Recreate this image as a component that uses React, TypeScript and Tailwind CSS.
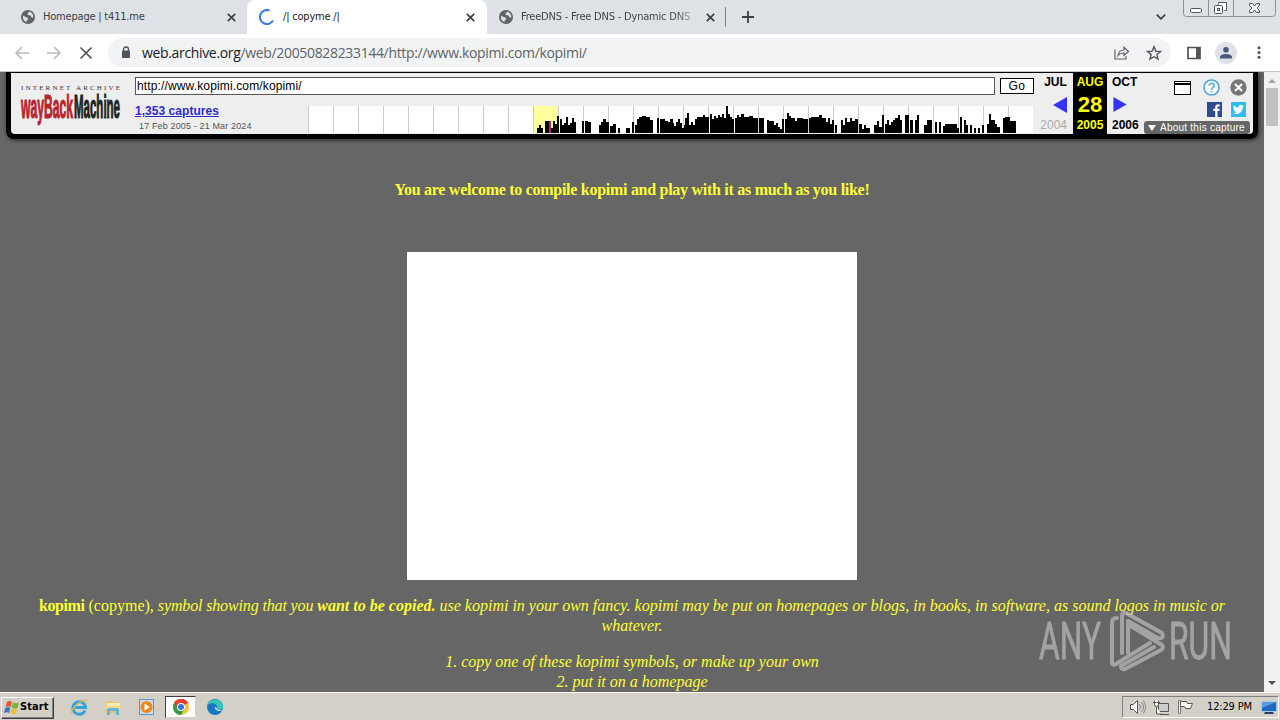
import React from 'react'

// [x, width, height] of each run of the capture histogram
const captures: number[][] = [
    [229, 6, 5], [231, 2, 8], [237, 4, 12], [243, 2, 5], [245, 2, 12], [247, 2, 9], [249, 2, 17],
    [252, 2, 14], [254, 2, 8], [256, 2, 10], [258, 2, 16], [260, 2, 8], [262, 2, 10], [264, 2, 15], [266, 2, 11],
    [274, 2, 12], [277, 3, 12], [280, 3, 11], [291, 2, 8], [293, 2, 11], [295, 3, 14], [298, 3, 11],
    [302, 3, 7], [305, 3, 9], [310, 2, 5], [318, 4, 5], [324, 2, 11], [327, 2, 8], [329, 2, 14], [331, 3, 16],
    [334, 4, 17], [338, 4, 16], [342, 3, 13], [349, 2, 15], [352, 5, 14], [357, 3, 12], [360, 2, 11], [362, 3, 14],
    [364, 2, 10], [366, 2, 7], [368, 2, 11], [370, 2, 14], [372, 2, 10], [374, 2, 5], [376, 2, 8],
    [377, 2, 15], [379, 2, 20], [381, 2, 8], [383, 2, 11], [385, 2, 8], [387, 2, 14], [389, 6, 16], [395, 2, 18],
    [397, 4, 16], [402, 2, 19], [404, 2, 14], [406, 2, 17], [408, 2, 15], [410, 2, 18], [412, 2, 16], [414, 2, 19],
    [416, 2, 15], [418, 2, 27], [420, 2, 19], [422, 2, 16], [424, 2, 14], [427, 2, 15], [429, 2, 18], [431, 2, 16],
    [433, 3, 19], [436, 5, 16], [441, 4, 17], [445, 5, 15], [451, 5, 15], [459, 2, 13], [461, 5, 12], [466, 2, 8],
    [468, 2, 10], [470, 2, 6], [472, 2, 4], [474, 2, 14], [477, 2, 14], [479, 2, 20], [481, 2, 17], [483, 4, 15],
    [487, 2, 12], [489, 6, 15], [495, 5, 14], [501, 2, 15], [503, 8, 16], [511, 3, 18], [514, 4, 15], [518, 2, 11],
    [520, 2, 15], [522, 2, 9], [524, 2, 13], [527, 2, 8], [533, 2, 13], [535, 2, 8], [537, 2, 15], [539, 3, 11],
    [542, 2, 15], [544, 3, 12], [547, 3, 14], [551, 3, 9], [554, 2, 4], [556, 2, 8], [558, 4, 5], [566, 3, 8],
    [569, 2, 12], [571, 3, 6], [574, 2, 18], [577, 2, 9], [579, 2, 13], [581, 2, 8], [583, 2, 11], [585, 2, 13],
    [587, 3, 15], [590, 2, 18], [592, 2, 13], [597, 4, 18], [602, 3, 13], [607, 3, 13], [609, 2, 18],
    [616, 3, 8], [619, 5, 13], [622, 2, 11], [627, 2, 11], [631, 2, 11], [635, 2, 7], [637, 12, 9], [649, 2, 5],
    [652, 2, 16], [656, 2, 13], [658, 2, 8], [662, 2, 8], [666, 2, 5], [670, 2, 5], [674, 2, 8], [679, 2, 9],
    [681, 2, 19], [683, 4, 13], [687, 2, 9], [689, 3, 6], [695, 2, 15], [697, 5, 16], [702, 2, 12], [704, 4, 12],
]

const Globe = () => (
    <svg className="w-[14px] h-[14px] shrink-0" viewBox="0 0 14 14">
        <circle cx="7" cy="7" r="7" fill="#5f6368" />
        <path d="M2 5.5 4.5 7l2 .4.8 2-1.7.8v2C3 11.500 1.500 9 2 5.500Z" fill="#dee1e6" />
        <path d="M8.500 1.800 6.500 3.200 7 5l2.500.6 1 2 1.700-.1C12.800 5 11 2.400 8.500 1.800Z" fill="#dee1e6" />
    </svg>
)

const Cross = ({ className = '' }: { className?: string }) => (
    <svg className={`w-[9px] h-[9px] shrink-0 ${className}`} viewBox="0 0 9 9" stroke="#3c4043" strokeWidth="1.7">
        <path d="M.8.8l7.4 7.4M8.200.8.8 8.200" />
    </svg>
)

const TabStrip = () => (
    <div className="flex h-[34px] bg-[#dee1e6] text-[11px] tracking-[-0.2px] text-[#3c4043] font-['DejaVu_Sans_Condensed','DejaVu_Sans',sans-serif]">
        <div className="flex items-center w-[247px] pl-[21px]">
            <Globe />
            <span className="ml-2 w-[184px] whitespace-nowrap">Homepage | t411.me</span>
            <Cross />
        </div>
        <div className="flex items-center w-[240px] pl-3 bg-white rounded-t-lg text-[#202124]">
            <svg className="w-4 h-4 shrink-0" viewBox="0 0 16 16" fill="none" stroke="#3b78e7" strokeWidth="2">
                <path d="M10.500 1.500A7 7 0 1 0 14 11.500" />
            </svg>
            <span className="ml-2 w-[183px] whitespace-nowrap">/| copyme /|</span>
            <Cross />
        </div>
        <div className="flex items-center w-[239px] pl-3">
            <Globe />
            <span className="ml-2 w-[172px] overflow-hidden whitespace-nowrap bg-linear-to-r from-[#3c4043] from-90% to-[#b0b4ba] bg-clip-text text-transparent">FreeDNS - Free DNS - Dynamic DNS</span>
            <Cross className="ml-[13px]" />
            <div className="ml-auto w-px h-5 bg-[#80868b]" />
        </div>
        <svg className="w-3 h-3 mt-[11px] ml-4" viewBox="0 0 12 12" stroke="#3c4043" strokeWidth="1.800">
            <path d="M6 0v12M0 6h12" />
        </svg>
        <svg className="w-[10px] h-[6px] mt-[14px] ml-auto" viewBox="0 0 10 6" fill="none" stroke="#3c4043" strokeWidth="1.700">
            <path d="m.8.6 4.200 4.200L9.200.6" />
        </svg>
        <svg className="w-[93px] h-[17px] ml-[17px] mr-1" viewBox="0 0 93 17" fill="none" stroke="#8b8f96">
            <path d="M.5 0v13.500q0 3 3 3h86q3 0 3-3V0M25.500 0v16M50.500 0v16" />
            <g stroke="#50555c">
                <rect x="7.500" y="8.500" width="11" height="4" rx="1" fill="#fff" />
                <path d="M35.500 4.500v-2h8v8h-2" fill="#fff" />
                <rect x="31.500" y="5.500" width="8" height="8" rx="1" fill="#fff" />
                <rect x="34.500" y="8.500" width="2" height="2" />
                <path d="M66.500 3.500h3l2 2.500 2-2.500h3v2L74 8l2.500 2.500v2h-3l-2-2.500-2 2.500h-3v-2L69 8l-2.500-2.500Z" fill="#fff" />
            </g>
        </svg>
    </div>
)

const AddressBar = () => (
    <div className="flex items-center h-[38px] bg-white border-b border-[#c8c8c8]">
        <svg className="w-[78px] h-4 ml-[14px] shrink-0" viewBox="0 0 78 16" fill="none" strokeWidth="1.600">
            <path d="M15 8H2M8 2 2 8l6 6M33 8h13M40 2l6 6-6 6" stroke="#b8babd" />
            <path d="m66.500 2.500 11 11M77.500 2.500l-11 11" stroke="#50545a" />
        </svg>
        <div className="flex items-center h-[29px] w-[1063px] ml-4 pl-[13px] pr-[9px] bg-[#f1f3f4] rounded-full">
            <svg className="w-[10px] h-[13px] shrink-0" viewBox="0 0 10 13">
                <path d="M2.500 5V3.500a2.500 2.500 0 0 1 5 0V5" fill="none" stroke="#50545a" strokeWidth="1.400" />
                <rect x="1" y="4.500" width="8" height="7.500" rx="1" fill="#50545a" />
            </svg>
            <span className="ml-[11px] text-[14px] tracking-[-0.34px] whitespace-nowrap text-[#5f6368] font-['Open_Sans',sans-serif]">
                <span className="text-[#202124]">web.archive.org</span>/web/20050828233144/http://www.kopimi.com/kopimi/
            </span>
            <svg className="w-4 h-[14px] ml-auto" viewBox="0 0 16 14" fill="none" stroke="#5f6368" strokeWidth="1.200">
                <path d="M1 3.500v9.500h11v-3" />
                <path d="M4 9.500c.5-4 3-5.500 6-5.500V1.200L14.500 5.500 10 9.500V7C7.500 7 5.500 7.500 4 9.500Z" />
            </svg>
            <svg className="w-4 h-4 ml-4" viewBox="0 0 16 16" fill="none" stroke="#50545a" strokeWidth="1.400">
                <path d="m8 1.700 1.800 4.400 4.700.4-3.600 3 1.100 4.600L8 11.700l-4 2.400 1.100-4.600-3.600-3 4.700-.4Z" />
            </svg>
        </div>
        <svg className="w-[14px] h-[14px] ml-4" viewBox="0 0 14 14">
            <path d="M1 1.500h12v11H1Z" fill="none" stroke="#50545a" strokeWidth="1.700" />
            <path d="M9 1h4v12H9Z" fill="#50545a" />
        </svg>
        <svg className="w-[22px] h-[22px] ml-[14px]" viewBox="0 0 22 22">
            <circle cx="11" cy="11" r="11" fill="#dee1e6" />
            <circle cx="11" cy="7.800" r="2.800" fill="#48597a" />
            <path d="M5 16.500v-1.500c0-4 12-4 12 0v1.500Z" fill="#48597a" />
        </svg>
        <svg className="w-1 h-[13px] ml-5" viewBox="0 0 4 13" fill="#50545a">
            <circle cx="2" cy="1.800" r="1.500" />
            <circle cx="2" cy="6.500" r="1.500" />
            <circle cx="2" cy="11.200" r="1.500" />
        </svg>
    </div>
)

const WaybackLogo = () => (
    <svg className="w-[106px] h-[46px] mt-[10px] ml-[9px] shrink-0 overflow-visible" viewBox="0 0 106 46">
        <text x="1" y="7" textLength="99" fontSize="7" fill="#333" fontFamily="Liberation Serif">INTERNET ARCHIVE</text>
        <g fontFamily="Liberation Sans" fontWeight="bold" fontSize="19" strokeWidth=".7">
            <text transform="translate(1 35) scale(1 1.7)" textLength="52" lengthAdjust="spacingAndGlyphs" fill="#b8232f" stroke="#b8232f">wayBack</text>
            <text transform="translate(54 35) scale(1 1.7)" textLength="46" lengthAdjust="spacingAndGlyphs" fill="#222" stroke="#222">Machine</text>
        </g>
    </svg>
)

const Sparkline = () => (
    <svg className="w-[725px] h-[27px]" viewBox="0 0 725 27" shapeRendering="crispEdges">
        <rect width="725" height="27" fill="#fff" />
        <rect x="226" width="24" height="27" fill="#ffff9c" />
        {Array.from({ length: 30 }, (_, i) => (
            <rect key={i} x={i * 25} width="1" height="27" fill="#ccc" />
        ))}
        {captures.map(([x, w, h], i) => (
            <rect key={i} x={x} y={27 - h} width={w} height={h} />
        ))}
        <rect x="241" y="15" width="2" height="12" fill="#b3285c" />
    </svg>
)

const WaybackBar = () => (
    <div className="flex h-[67px] ml-[6px] mr-[6px] pl-[5px] pr-[5px] pb-[5px] pt-px bg-black rounded-b-lg shadow-[1px_1px_4px_#222] font-['Liberation_Sans',Arial,sans-serif]">
        <div className="flex w-full h-full bg-[#eee] rounded-b-sm">
            <WaybackLogo />
            <div className="w-[899px] ml-[9px] pt-1 shrink-0">
                <div className="flex">
                    <div className="w-[860px] h-[18px] pl-px border border-[#555] bg-white text-[12px] leading-[16px] tracking-[0.14px] text-black">http://www.kopimi.com/kopimi/</div>
                    <div className="w-[34px] h-4 ml-[5px] mt-px border border-black bg-white text-[12px] leading-[15px] tracking-[0.500px] text-center">Go</div>
                </div>
                <div className="flex">
                    <div className="w-[173px] pt-[9px]">
                        <div className="text-[12px] leading-[15px] font-bold underline text-[#2b2bd0] tracking-[0.04px]">1,353 captures</div>
                        <div className="pl-1 pt-px text-[9px] leading-[12px] text-[#555] tracking-[0.14px]">17 Feb 2005 - 21 Mar 2024</div>
                    </div>
                    <div className="pt-[11px]"><Sparkline /></div>
                </div>
            </div>
            <div className="flex w-[109px] shrink-0 text-[12px] font-bold text-center">
                <div className="flex flex-col w-[38px] pl-[5px]">
                    <span className="leading-[18px]">JUL</span>
                    <svg className="w-[14px] h-4 mt-[6px] ml-[14px]" viewBox="0 0 14 16"><path d="M14 0v16L0 8Z" fill="#33f" /></svg>
                    <span className="mt-1 pr-[5px] leading-[16px] font-normal text-[#aaa] text-right">2004</span>
                </div>
                <div className="flex flex-col w-[34px] ml-px bg-black text-[#ff0]">
                    <span className="leading-[18px]">AUG</span>
                    <span className="pt-px text-[22px] leading-[26px]">28</span>
                    <span className="leading-[15px]">2005</span>
                </div>
                <div className="flex flex-col w-[34px] pl-[5px] text-left">
                    <span className="leading-[18px]">OCT</span>
                    <svg className="w-[14px] h-4 mt-[6px] ml-px" viewBox="0 0 14 16"><path d="M0 0v16l14-8Z" fill="#33f" /></svg>
                    <span className="mt-1 leading-[18px]">2006</span>
                </div>
            </div>
            <div className="flex flex-col w-[106px] ml-px shrink-0">
                <div className="flex h-[29px] pt-[6px] pl-[30px]">
                    <svg className="w-[17px] h-[14px] mt-[2px]" viewBox="0 0 17 14" shapeRendering="crispEdges">
                        <path d="M.5.5h16v13H.5Z" fill="#fff" stroke="#000" />
                        <path d="M0 2h17v2H0Z" />
                    </svg>
                    <svg className="w-[17px] h-[17px] ml-3" viewBox="0 0 17 17">
                        <circle cx="8.500" cy="8.500" r="7.500" fill="#fff" stroke="#4fa9e2" strokeWidth="1.700" />
                        <path d="M6 6.800c0-3.300 5.200-3.200 5.200 0 0 1.800-2.700 1.900-2.700 4M8.500 11.800v1.600" fill="none" stroke="#4fa9e2" strokeWidth="1.500" />
                    </svg>
                    <svg className="w-[17px] h-[17px] ml-[10px]" viewBox="0 0 17 17">
                        <circle cx="8.500" cy="8.500" r="8.200" fill="#767676" />
                        <path d="m5 5 7 7M12 5l-7 7" stroke="#fff" strokeWidth="2.200" />
                    </svg>
                </div>
                <div className="flex gap-[9px] h-[19px] pl-[63px]">
                    <svg className="w-[15px] h-[15px]" viewBox="0 0 15 15">
                        <path d="M0 0h15v15H0Z" fill="#2d4b8e" />
                        <path d="M10.500 15V9h2l.3-2.200h-2.300V5.500c0-.8.3-1 1-1h1.300V2.400C9.500 2 8.200 3.200 8.200 5.300v1.500H6.300V9h1.900v6Z" fill="#fff" />
                    </svg>
                    <svg className="w-[15px] h-[15px]" viewBox="0 0 15 15">
                        <path d="M0 0h15v15H0Z" fill="#31bdec" />
                        <path d="M2 11c3.500 2.500 9.500.5 9.700-5.500L13 4l-1.300.2.8-1.400-1.500.6C9.500 2 7.200 3.300 7.500 5.500 5.500 5.500 4 4.600 2.900 3.200 2.200 4.500 2.500 5.800 3.500 6.600l-1-.2c.1 1.300.8 2 2 2.400h-1c.4 1 1.200 1.400 2.100 1.500-1 .7-2.200.9-3.600.7Z" fill="#fff" />
                    </svg>
                </div>
                <div className="flex items-center h-[13px] pl-1 bg-[#666] rounded-[3px] text-white text-[10px] tracking-[0.24px] whitespace-nowrap">
                    <svg className="w-2 h-[6px] mr-1 shrink-0" viewBox="0 0 8 6"><path d="M0 0h8L4 6Z" fill="#fff" /></svg>
                    About this capture
                </div>
            </div>
        </div>
    </div>
)

const Page = () => (
    <div className="flex h-[620px] bg-[#666]">
        <div className="w-[1264px] h-full overflow-hidden">
            <WaybackBar />
            <div className="text-center text-[16px] leading-5 text-[#ff3] whitespace-nowrap font-['Liberation_Serif','Times_New_Roman',serif]">
                <p className="mt-[41px] font-bold tracking-[-0.28px]">You are welcome to compile kopimi and play with it as much as you like!</p>
                <div className="w-[450px] h-[328px] mt-[52px] mx-auto bg-white" />
                <p className="mt-4 italic">
                    <b className="not-italic tracking-[-0.4px]">kopimi</b> <span className="not-italic">(copyme)</span>, <span className="tracking-[-0.14px]">symbol showing that you</span> <b>want to be copied.</b> use kopimi in your own fancy. kopimi may be put on homepages or blogs, in books, in software, as sound logos in music or
                    <br />
                    whatever.
                </p>
                <p className="mt-4 italic">
                    1. copy one of these kopimi symbols, or make up your own
                    <br />
                    2. put it on a homepage
                </p>
            </div>
        </div>
        <div className="flex flex-col items-center w-4 h-full bg-[#f1f1f1]">
            <svg className="w-2 h-1 mt-[7px]" viewBox="0 0 8 4"><path d="M0 4h8L4 0Z" fill="#a3a3a3" /></svg>
            <div className="w-3 h-[38px] mt-[5px] bg-[#c1c1c1]" />
            <svg className="w-2 h-1 mt-auto mb-[7px]" viewBox="0 0 8 4"><path d="M0 0h8L4 4Z" fill="#505050" /></svg>
        </div>
    </div>
)

const Watermark = () => (
    <svg className="absolute left-[1036px] top-[606px] w-[204px] h-[72px] overflow-visible" viewBox="0 0 204 72" fill="none" opacity=".65">
        <g fill="#c4c4c4" stroke="#c4c4c4" strokeWidth=".8" fontFamily="Roboto" fontSize="51">
            <text x="3" y="53" textLength="62" lengthAdjust="spacingAndGlyphs">ANY</text>
            <text x="133" y="53" textLength="63" lengthAdjust="spacingAndGlyphs">RUN</text>
        </g>
        <g stroke="#c4c4c4" strokeWidth="4" strokeLinejoin="round" strokeLinecap="round">
            <path d="M81 12q-5 0-5 4v40q0 4 4 2l34-21M86 47V10q0-5 4-3l36 20q2 4-1 5-3 1-5-1L92 15v32M93 19l33 20q2 3-1 5L89 63q-4 1-4-3l33-19" />
        </g>
    </svg>
)

const Taskbar = () => (
    <div className="flex items-center h-7 pt-px bg-[#d4d0c8] border-t border-white text-black font-['DejaVu_Sans_Condensed','DejaVu_Sans',sans-serif]">
        <div className="flex items-center w-[53px] h-[22px] ml-px mt-px pl-[2px] border border-t-white border-l-white border-r-[#404040] border-b-[#404040] shadow-[inset_-1px_-1px_#808080] text-[11px] font-bold">
            <svg className="w-4 h-[15px] shrink-0" viewBox="0 0 16 15">
                <path d="M3 2q3-2 5 0L6.500 7q-2-1.500-5 0Z" fill="#e8522b" />
                <path d="M9 2.500q3 1.500 6 0L13.500 8q-3 1.500-6-.5Z" fill="#74b33e" />
                <path d="M1.200 8q3-2 5 0L5 13q-2-1.500-5 0Z" fill="#3977c6" />
                <path d="M7.200 8.500q3 1.500 6 0L12 13.500q-3 1.500-6-.5Z" fill="#f4bf35" />
            </svg>
            <span className="tracking-[0.1px]">Start</span>
        </div>
        <svg className="w-[18px] h-[18px] ml-4" viewBox="0 0 18 18" fill="none">
            <path d="M15 12.500A6.300 6.300 0 1 1 15.500 9.500H5" stroke="#35a3df" strokeWidth="3" />
            <path d="M2 16C-1 12 12 0 17 3" stroke="#e9b938" strokeWidth="1.300" />
        </svg>
        <svg className="w-[18px] h-[18px] ml-4" viewBox="0 0 18 18">
            <path d="M2 3h5l1 1h7v11H2Z" fill="#e6c862" />
            <path d="M3 5h13v4H3Z" fill="#f8edb0" />
            <path d="M1 8h16v3H1Z" fill="#f1d982" />
            <path d="M3 17v-5q0-2 2-2h8q2 0 2 2v5h-3v-4H6v4Z" fill="#64b5dc" />
        </svg>
        <svg className="w-[18px] h-[18px] ml-4" viewBox="0 0 18 18">
            <rect x="1.500" y="1.500" width="14" height="15" fill="#c4def2" stroke="#5f93c0" />
            <circle cx="8.500" cy="9" r="6" fill="#f28518" />
            <path d="M6.500 5.500v7l5.500-3.500Z" fill="#fff" />
        </svg>
        <div className="flex items-center justify-center w-[31px] h-[22px] ml-[9px] bg-white border border-t-[#404040] border-l-[#404040] border-r-[#d4d0c8] border-b-[#d4d0c8]">
            <svg className="w-4 h-4" viewBox="0 0 16 16">
                <circle cx="8" cy="8" r="8" fill="#f9c62d" />
                <path d="M8 8 1.070 4A8 8 0 0 1 14.930 4Z" fill="#e0402f" />
                <path d="M8 8 1.070 4A8 8 0 0 0 8 16l3.500-6Z" fill="#2f9d4c" />
                <path d="M8 4h6.930a8 8 0 0 0-13.860 0L5 9Z" fill="#e0402f" />
                <circle cx="8" cy="8" r="4" fill="#fff" />
                <circle cx="8" cy="8" r="3" fill="#3874df" />
            </svg>
        </div>
        <svg className="w-4 h-4 ml-[11px]" viewBox="0 0 16 16">
            <circle cx="8" cy="8" r="8" fill="#1677c7" />
            <path d="M.3 6C2-1 14-2 16 7c.3 4-5 4.500-6.500 3C12 6 6 2 .3 6Z" fill="#35c4b5" />
            <path d="M8.500 7.500c-1.500 2 .5 5 5.500 4.500 1-.2 1.500-.6 1.700-1-3 .8-6-.500-7.200-3.500Z" fill="#d4d0c8" />
        </svg>
        <div className="flex items-center h-[22px] w-[157px] ml-auto mr-px pl-[6px] border border-t-[#808080] border-l-[#808080] border-r-white border-b-white text-[11px] whitespace-nowrap">
            <svg className="w-[66px] h-[18px] shrink-0" viewBox="0 0 66 18" stroke="#555" fill="#fff">
                <path d="M1.500 6.500h3l4-4v13l-4-4h-3Z" />
                <path d="M10.500 6q2 3 0 6M12.500 4q4 5 0 10M14.500 2.500q4 6.500 0 13" fill="none" stroke="#888" />
                <path d="M29.500 5.500h10v8h-10ZM31 16.500h9" fill="#ccc" />
                <path d="M25.500 2.500v4q0 2 2 2t2-2v-4M24 4.500h7M27.500 9v7h5" />
                <path d="M49.500 2.500h2v13h-2Z" stroke="#777" />
                <path d="M51.500 3.500h6l1 2h5l-2 5h-5l-1-2h-4Z" />
            </svg>
            <span className="ml-3 tracking-[-0.15px]">12:29 PM</span>
            <svg className="w-4 h-[15px] ml-auto mr-[1px]" viewBox="0 0 16 15">
                <rect x=".5" y="1.500" width="15" height="10" fill="#2468bd" stroke="#a9c8e5" />
                <path d="M1 2h14L1 8Z" fill="#579ce2" />
                <path d="M4 12h8l1 2H3Z" fill="#243f66" />
            </svg>
        </div>
    </div>
)

const App = () => {
    return (
        <div className="relative w-[1280px] h-[720px] overflow-hidden">
            <TabStrip />
            <AddressBar />
            <Page />
            <Taskbar />
            <Watermark />
        </div>
    )
}

export default App
